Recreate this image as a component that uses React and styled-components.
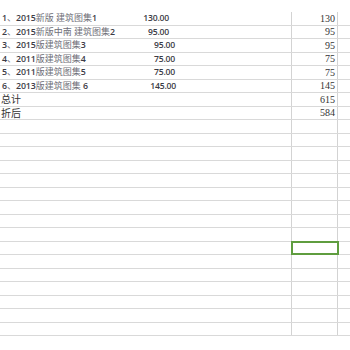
import React from "react";
import styled, { createGlobalStyle } from "styled-components";

const Global = createGlobalStyle`
  html, body { margin: 0; padding: 0; background: #fff; }
  body { width: 350px; height: 350px; overflow: hidden; }
`;

const Sheet = styled.div`
  padding-top: 12px;
  width: 350px;
`;

const Row = styled.div`
  display: grid;
  grid-template-columns: 291px 47px 1fr;
  height: 13.5px;
  box-sizing: border-box;
  border-bottom: 1px solid #d9d9d9;
`;

const CellA = styled.div`
  display: flex;
  align-items: center;
  position: relative;
  overflow: visible;
  white-space: nowrap;
`;

const Label = styled.span`
  padding-left: 2px;
  font-family: "Open Sans", "Noto Sans CJK SC", sans-serif;
  font-size: 8.8px;
  font-weight: 600;
  color: #3b3b45;
  letter-spacing: -0.1px;
  width: 130px;
  line-height: 12px;
`;

const Han = styled.span`
  font-family: "Noto Sans CJK SC", sans-serif;
  font-weight: 400;
  color: #6f6f78;
  font-size: 9px;
  letter-spacing: 0;
`;

const Title = styled.span`
  padding-left: 1px;
  font-family: "Noto Sans CJK SC", sans-serif;
  font-size: 10px;
  color: #333;
  line-height: 12px;
`;

const Amount = styled.span`
  width: ${(p) => (p.$end ? p.$end - 130 : 43)}px;
  text-align: right;
  font-family: "Open Sans", sans-serif;
  font-size: 8.6px;
  font-weight: 600;
  color: #3b3b45;
  letter-spacing: -0.2px;
  line-height: 12px;
`;

const CellB = styled.div`
  position: relative;
  border-left: 1px solid #d3d3d3;
  border-right: 1px solid #d3d3d3;
  display: flex;
  align-items: center;
  justify-content: flex-end;
  padding-right: 2px;
  font-family: "Liberation Serif", serif;
  font-size: 10px;
  color: #333;
  ${(p) =>
    p.$selected &&
    `
    &::after {
      content: "";
      position: absolute;
      left: -1px;
      right: -2px;
      top: -1px;
      bottom: -1px;
      border: 2px solid #5f9d3f;
      box-sizing: border-box;
    }
  `}
`;

const CellC = styled.div``;

const items = [
  { n: "1", parts: ["2015", "新版", " ", "建筑图集", "1"], amt: "130.00", end: 167, val: "130" },
  { n: "2", parts: ["2015", "新版中南", " ", "建筑图集", "2"], amt: "95.00", end: 167, val: "95" },
  { n: "3", parts: ["2015", "版建筑图集", "3"], amt: "95.00", end: 173, val: "95" },
  { n: "4", parts: ["2011", "版建筑图集", "4"], amt: "75.00", end: 173, val: "75" },
  { n: "5", parts: ["2011", "版建筑图集", "5"], amt: "75.00", end: 173, val: "75" },
  { n: "6", parts: ["2013", "版建筑图集", " 6"], amt: "145.00", end: 174, val: "145" },
];

const isHan = (s) => /[\u4e00-\u9fff]/.test(s);

export default function App() {
  const blanks = Array.from({ length: 16 }, (_, i) => i);
  return (
    <>
      <Global />
      <Sheet>
        {items.map((it) => (
          <Row key={it.n}>
            <CellA>
              <Label>
                {it.n}
                <Han>、</Han>
                {it.parts.map((p, i) =>
                  isHan(p) ? <Han key={i}>{p}</Han> : <React.Fragment key={i}>{p}</React.Fragment>
                )}
              </Label>
              <Amount $end={it.end}>{it.amt}</Amount>
            </CellA>
            <CellB>{it.val}</CellB>
            <CellC />
          </Row>
        ))}
        <Row>
          <CellA><Title>总计</Title></CellA>
          <CellB>615</CellB>
          <CellC />
        </Row>
        <Row>
          <CellA><Title>折后</Title></CellA>
          <CellB>584</CellB>
          <CellC />
        </Row>
        {blanks.map((i) => (
          <Row key={"b" + i}>
            <CellA />
            <CellB $selected={i === 9} />
            <CellC />
          </Row>
        ))}
      </Sheet>
    </>
  );
}
